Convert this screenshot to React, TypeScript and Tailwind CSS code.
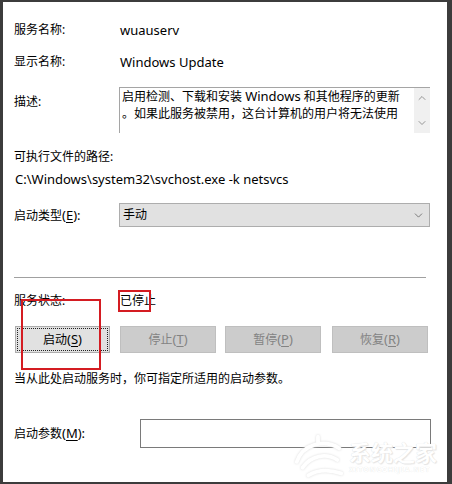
import { ChevronDown, ChevronUp } from "lucide-react";

const labelCls = "w-[105px] shrink-0";

// Latin runs sit a touch larger than the CJK glyphs, like YaHei's Latin set
function L({ children }: { children: React.ReactNode }) {
  return <span className="text-[13px]">{children}</span>;
}

function Key({ k }: { k: string }) {
  return <span className="underline underline-offset-2 text-[13px]">{k}</span>;
}

function SvcButton({ label, k, enabled }: { label: string; k: string; enabled?: boolean }) {
  return (
    <button
      className={
        enabled
          ? "w-[95px] h-[27px] bg-[#e1e1e1] border border-[#adadad] outline-1 outline-dotted outline-[#222] outline-offset-[-3px] text-[#000]"
          : "w-[96px] h-[27px] bg-[#cccccc] border border-[#bfbfbf] text-[#838383]"
      }
    >
      {label}
      <L>(</L>
      <Key k={k} />
      <L>)</L>
    </button>
  );
}

function Watermark() {
  return (
    <div className="absolute left-[286px] top-[430px] flex items-center gap-[2px] pointer-events-none select-none whitespace-nowrap">
      <svg width="58" height="50" viewBox="0 0 60 50" fill="none">
        <path
          d="M8 30 C14 12 36 6 52 16 M14 36 C22 24 38 20 50 28 M20 44 C30 38 42 38 54 42 M30 10 L30 4"
          stroke="#ffffff"
          strokeWidth="4"
          strokeLinecap="round"
          style={{ filter: "drop-shadow(0 0 1px #dadada)" }}
        />
      </svg>
      <div className="flex flex-col items-start">
        <span className="text-[22px] leading-[26px] font-bold text-white [text-shadow:0_0_1px_#d6d6d6,1px_1px_1px_#e6e6e6]">
          系统之家
        </span>
        <span className="text-[7px] leading-[10px] font-bold text-white [text-shadow:0_0_1px_#dcdcdc] tracking-[1px]">
          XITONGZHIJIA.NET
        </span>
      </div>
    </div>
  );
}

export default function App() {
  return (
    <div className="relative w-[452px] h-[484px] overflow-hidden bg-white border-l-[3px] border-t-[2px] border-r-[5px] border-b-[2px] border-[#3c3c3c] font-['Noto_Sans','Noto_Sans_CJK_SC',sans-serif] text-[12px] leading-[20px] text-black">
      <div className="pl-[11px] pt-[18px]">
        <div className="flex h-[20px]">
          <span className={labelCls}>服务名称:</span>
          <span className="ml-px">
            <L>wuauserv</L>
          </span>
        </div>

        <div className="flex h-[20px] mt-[12px]">
          <span className={labelCls}>显示名称:</span>
          <span className="ml-px">
            <L>Windows Update</L>
          </span>
        </div>

        <div className="flex mt-[15px]">
          <span className={labelCls + " pt-[5px]"}>描述:</span>
          <div className="flex w-[311px] h-[46px] border-t border-l border-[#a5a5a5]">
            <p className="flex-1 pl-[2px] pt-0 leading-[17px] whitespace-nowrap overflow-hidden">
              启用检测、下载和安装 <L>Windows</L> 和其他程序的更新
              <br />
              。如果此服务被禁用，这台计算机的用户将无法使用
            </p>
            <div className="w-[16px] bg-[#f0f0f0] flex flex-col justify-between items-center py-[4px] text-[#7d7d7d]">
              <ChevronUp size={12} strokeWidth={1.6} />
              <ChevronDown size={12} strokeWidth={1.6} />
            </div>
          </div>
        </div>

        <div className="h-[20px] mt-[14px]">可执行文件的路径:</div>
        <div className="h-[20px] mt-[2px] ml-px">
          <L>C:\Windows\system32\svchost.exe -k netsvcs</L>
        </div>

        <div className="flex items-center mt-[14px]">
          <span className={labelCls}>
            启动类型<L>(</L>
            <Key k="E" />
            <L>):</L>
          </span>
          <div className="flex items-center justify-between w-[311px] h-[24px] bg-[#e1e1e1] border border-[#adadad] pl-[3px] pr-[4px]">
            <span>手动</span>
            <ChevronDown size={13} strokeWidth={1.2} className="text-[#444]" />
          </div>
        </div>

        <div className="w-[412px] h-px bg-[#a0a0a0] mt-[50px]" />

        <div className="flex h-[20px] mt-[13px]">
          <span className={labelCls}>服务状态:</span>
          <span className="ml-px">已停止</span>
        </div>

        <div className="flex items-center mt-[15px] w-[416px]">
          <div className="ml-px">
            <SvcButton label="启动" k="S" enabled />
          </div>
          <div className="ml-[10px]">
            <SvcButton label="停止" k="T" />
          </div>
          <div className="ml-[9px]">
            <SvcButton label="暂停" k="P" />
          </div>
          <div className="ml-[11px]">
            <SvcButton label="恢复" k="R" />
          </div>
        </div>

        <div className="h-[20px] mt-[16px]">当从此处启动服务时，你可指定所适用的启动参数。</div>

        <div className="flex items-center mt-[30px]">
          <span className="w-[126px] shrink-0">
            启动参数<L>(</L>
            <Key k="M" />
            <L>):</L>
          </span>
          <div className="w-[291px] h-[29px] border border-[#7a7a7a] bg-white" />
        </div>
      </div>

      {/* annotation frames */}
      <div className="absolute left-[115px] top-[288px] w-[33px] h-[22px] border-2 border-[#d41c22]" />
      <div className="absolute left-[18px] top-[297px] w-[80px] h-[71px] border-2 border-[#d41c22]" />

      <Watermark />
    </div>
  );
}
